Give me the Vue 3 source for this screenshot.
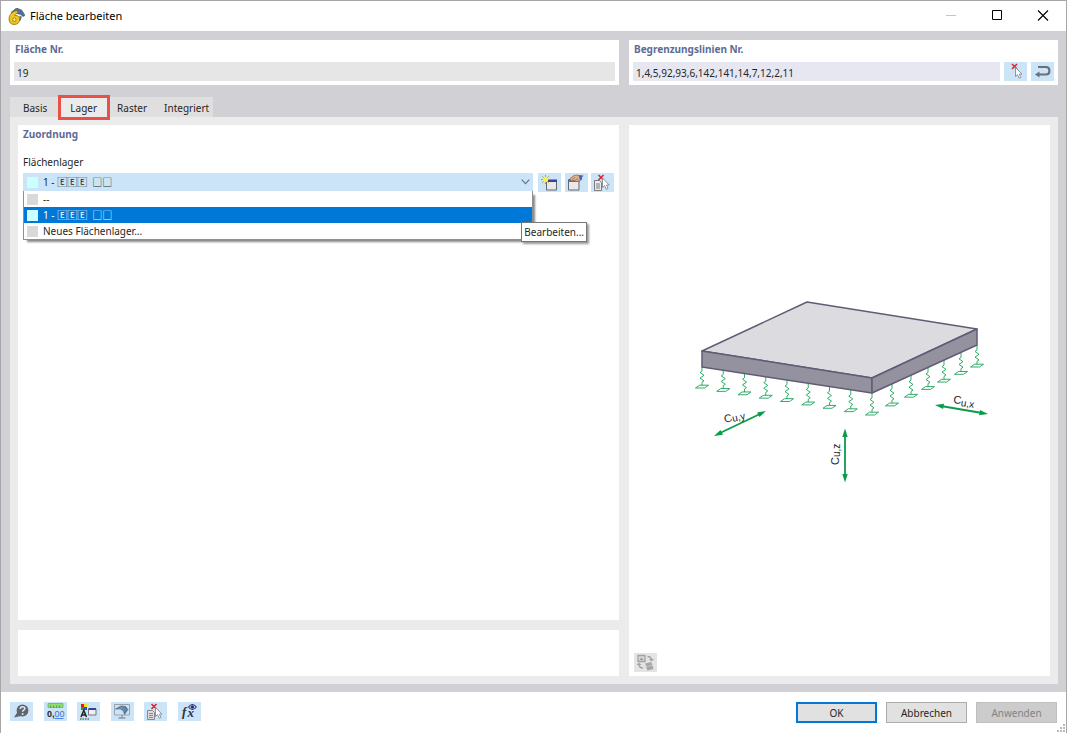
<script setup>
import { ref } from 'vue'

const surface = ref('19')
const lines = ref('1,4,5,92,93,6,142,141,14,7,12,2,11')
const tabs = ['Basis', 'Lager', 'Raster', 'Integriert']
const activeTab = ref('Lager')
const supportName = '1 - 🄴🄴🄴  □□'
const support = ref(supportName)
const options = [
  { label: '--', swatch: 'grey' },
  { label: supportName, swatch: 'cyan' },
  { label: 'Neues Flächenlager...', swatch: 'grey' },
]

const springs = []
for (let i = 0; i <= 8; i++) {
  springs.push({ x: 702 + (i * 170) / 8, y: 366 + (i * 27) / 8 })
}
for (const x of [892, 911, 928, 944, 961, 977]) {
  springs.push({ x, y: 393 - ((x - 872) * 48) / 105 })
}
</script>

<template>
  <div class="window">
    <header class="titlebar">
      <svg class="app-icon" viewBox="0 0 16 16" aria-hidden="true">
        <path d="M3 4 8 0l5 2 3 5-2 1-2-2-5-1-3 2z" fill="#4f6f9f" stroke="#3d5478" stroke-width=".6" />
        <path d="M11 7l2 1-1 4-2-1z" fill="#64758e" />
        <path d="M8.500 2.500C4 3 1 6 1 10.500 1 14 3 15.500 6 15.500s5-2 5-4.800C11 8.500 9.500 7 7.300 7l-1 .2C7 5.500 8 4.800 9.500 4.500z" fill="#f0c61a" stroke="#8e7518" stroke-width=".8" />
        <ellipse cx="6" cy="11" rx="1.500" ry="1.800" fill="#fff0a0" stroke="#8e7518" stroke-width=".8" />
      </svg>
      <h1>Fläche bearbeiten</h1>
      <div class="window-buttons">
        <button type="button" disabled aria-label="Minimieren"><svg viewBox="0 0 12 12"><path d="M1 5.500h10" stroke="#c4c4c4" /></svg></button>
        <button type="button" aria-label="Maximieren"><svg viewBox="0 0 12 12"><path d="M1.500 .5h9v9h-9z" fill="none" stroke="#000" /></svg></button>
        <button type="button" aria-label="Schließen"><svg viewBox="0 0 12 12"><path d="M1 .5l10 10M11 .5 1 10.500" stroke="#000" stroke-width="1.100" /></svg></button>
      </div>
    </header>

    <main class="content">
      <div class="top">
        <section class="box">
          <label for="surface">Fläche Nr.</label>
          <div class="field-row"><input id="surface" v-model="surface" class="readonly" readonly /></div>
        </section>
        <section class="box">
          <label for="lines">Begrenzungslinien Nr.</label>
          <div class="field-row">
            <input id="lines" v-model="lines" />
            <button class="tool" type="button" aria-label="Linien auswählen">
              <svg viewBox="0 0 23 19"><path d="M8 2l5 5M13 2 8 7" stroke="#e0252f" stroke-width="1.600" /><path d="M11.500 5.500v9l2-1.800 1.500 3.500 1.800-.8-1.500-3.300h2.700z" fill="#fff" stroke="#858b92" stroke-width=".9" /></svg>
            </button>
            <button class="tool" type="button" aria-label="Zurücksetzen">
              <svg viewBox="0 0 23 19"><path d="M7 5h8c4.500 0 4.500 7.500 0 7.500H7" fill="none" stroke="#6b6f75" stroke-width="2.200" /><path d="M8.500 9.500v6l-4.500-3z" fill="#6b6f75" /></svg>
            </button>
          </div>
        </section>
      </div>

      <nav class="tabs" role="tablist">
        <button
          v-for="tab in tabs"
          :key="tab"
          type="button"
          role="tab"
          :aria-selected="tab === activeTab"
          :class="{ active: tab === activeTab }"
          @click="activeTab = tab"
        >{{ tab }}</button>
      </nav>

      <div class="page">
        <div class="left">
          <section class="assign">
            <h2>Zuordnung</h2>
            <label for="support">Flächenlager</label>
            <div class="support-row">
              <div class="combo">
                <i class="swatch cyan"></i>
                <select id="support" v-model="support">
                  <option v-for="o in options" :key="o.label" :value="o.label">{{ o.label.replace('  ', '\u00a0\u00a0') }}</option>
                </select>
                <svg class="chevron" viewBox="0 0 9 6"><path d="M.7.700l3.800 4 3.800-4" fill="none" stroke="#6b747c" stroke-width="1.200" /></svg>
                <ul class="list" role="listbox" aria-label="Flächenlager">
                  <li
                    v-for="o in options"
                    :key="o.label"
                    role="option"
                    :aria-selected="o.label === support"
                    :class="{ selected: o.label === support }"
                    @click="support = o.label"
                  ><i class="swatch" :class="o.swatch"></i>{{ o.label }}</li>
                </ul>
                <div class="tooltip" role="tooltip">Bearbeiten...</div>
              </div>
              <div class="support-tools">
                <button class="tool" type="button" aria-label="Neu">
                  <svg viewBox="0 0 23 19">
                    <path d="M8.500 7.500h10v9.500h-10z" fill="#e9e9ec" stroke="#66666c" /><path d="M9 6.500h10v2.500H9z" fill="#3b4098" />
                    <path d="M7.500 2v9M3 6.500h9M4.300 3.300l6.400 6.400M10.700 3.300 4.300 9.700" stroke="#9b9d35" stroke-width=".9" /><circle cx="7.500" cy="6.500" r="2.700" fill="#fff23c" />
                  </svg>
                </button>
                <button class="tool" type="button" aria-label="Bearbeiten">
                  <svg viewBox="0 0 23 19">
                    <path d="M3.500 6.500h10.500v10.500h-10.500z" fill="#e9e9ec" stroke="#66666c" /><path d="M4 6h10v3H4z" fill="#6f6f78" />
                    <path d="M5 5.500 9 2.500l4-.500 3 2-1 4-4 .5-2-1-3 .5z" fill="#dcae8c" stroke="#87644e" stroke-width=".7" /><path d="M7 6.500l3-2M10 7.500l3-2" stroke="#87644e" stroke-width=".6" /><path d="M13.500 2l5 .5-1.500 2v2l-2 1z" fill="#4667af" />
                  </svg>
                </button>
                <button class="tool" type="button" aria-label="Auswählen">
                  <svg viewBox="0 0 23 19">
                    <path d="M3.500 7.500h5l2 2v8h-7z" fill="#ececec" stroke="#7b7b7b" /><path d="M5 11h4M5 13h4M5 15h4" stroke="#7b7b7b" />
                    <path d="M7.500 2l5 5M12.500 2l-5 5" stroke="#e0252f" stroke-width="1.600" /><path d="M11.500 5v9.500l2-2 1.800 3.800 1.700-.8-1.600-3.500h2.800z" fill="#fff" stroke="#858b92" stroke-width=".9" />
                  </svg>
                </button>
              </div>
            </div>
          </section>
          <section class="info"></section>
        </div>

        <section class="preview">
          <svg class="diagram" viewBox="690 292 300 216" role="img" aria-label="Flächenlager mit Federn">
            <g fill="none" stroke="#1aa35a" stroke-width=".9">
              <path
                v-for="(s, i) in springs"
                :key="i"
                :transform="`translate(${s.x} ${s.y})`"
                d="M0 0v5l-2 1.500 4 2.800-4 2.800 4 2.800-2 1.400v3M-6.500 22l4-2.800h9l-4 2.800z"
              />
            </g>
            <g stroke="#5f5d74" stroke-width="1.500" stroke-linejoin="round">
              <path d="M702 351 807 302 977 329 872 378z" fill="#dcdbe0" />
              <path d="M702 351 872 378V393L702 367z" fill="#94929f" />
              <path d="M872 378 977 329V345L872 393z" fill="#94929f" />
            </g>
            <g stroke="#0b9b4c" stroke-width="1.800">
              <path d="M719 433.500 761 413.500" /><path d="M845 435v41" /><path d="M941 406l41 7" />
            </g>
            <g fill="#0b9b4c">
              <path d="M714 436l6.500-6 2.500 4.800zM766 411l-8.900 1.400 2.400 4.700z" />
              <path d="M845 428.500l-2.700 8.500h5.400zM845 482.500l-2.700-8.500h5.400z" />
              <path d="M935 405l9-1.300-.9 5.300zM988 414l-8-4-.9 5.300z" />
            </g>
            <g class="axis">
              <text transform="translate(725 423) rotate(-14)">C<tspan class="sub" dy="1">u,y</tspan></text>
              <text transform="translate(839 465) rotate(-90)">C<tspan class="sub" dy="1">u,z</tspan></text>
              <text transform="translate(953 403) rotate(8)">C<tspan class="sub" dy="2">u,x</tspan></text>
            </g>
          </svg>
          <button class="tool muted" type="button" disabled aria-label="Ansicht wechseln">
            <svg viewBox="0 0 23 19">
              <path d="M4 2.500h7v6H4z" fill="#d8d8d8" stroke="#a2a2a2" stroke-width="1.300" /><path d="M5.500 7l2-2.500 2 2.500z" fill="#999" />
              <path d="M13.500 3.500c3 0 4 1.500 4 4M9 15c-3 0-4-1-4-4" fill="none" stroke="#a2a2a2" stroke-width="1.400" /><path d="M15 6h5L17.500 8.500zM2.500 12h5L5 9.500z" fill="#a2a2a2" />
              <path d="M11 10.500l6-1.500 1.500 3-6 1.500zM12 14l6.500-1.500 1 3.500-6 1.500z" fill="#a6a6a6" />
            </svg>
          </button>
        </section>
      </div>
    </main>

    <footer class="footer">
      <div class="footer-tools">
        <button class="tool" type="button" aria-label="Hilfe">
          <svg viewBox="0 0 23 19"><circle cx="12.500" cy="8.500" r="5.900" fill="#61656a" /><path d="M7.500 10 4 15.500l7-1.500z" fill="#61656a" /><path d="M10.300 7c0-3 4.500-3 4.500-.5 0 1.600-2.200 1.600-2.200 3.200" fill="none" stroke="#d6e8f7" stroke-width="1.500" /><circle cx="12.600" cy="12" r="1" fill="#d6e8f7" /></svg>
        </button>
        <button class="tool" type="button" aria-label="Einheiten">
          <svg viewBox="0 0 23 19"><path d="M4 1.500h15v4H4z" fill="#91dc75" stroke="#6bb657" stroke-width=".8" /><path d="M6.500 3.500v2M9.500 3.500v2M12.500 3.500v2M15.500 3.500v2" stroke="#5b9c49" /><text x="3" y="15" class="digits">0,<tspan fill="#3c71d5" font-weight="400">00</tspan></text><path d="M10.500 16.500h9" stroke="#4c83e6" /></svg>
        </button>
        <button class="tool" type="button" aria-label="Anzeige">
          <svg viewBox="0 0 23 19"><path d="M4 2h3v3H4z" fill="#e51a12" /><path d="M7 2h3v3H7z" fill="#efe31b" /><path d="M4 5h3v3H4z" fill="#15a426" /><path d="M7 5h3v3H7z" fill="#3347f0" /><path d="M4 15 6.800 8.500 9.500 15M5 13h3.500" fill="none" stroke="#222" stroke-width="1.500" /><path d="M3 17h9" stroke="#333" stroke-dasharray="1.500 1" /><path d="M11.500 7h7.500v6h-7.500z" fill="#f0f0f0" stroke="#77787f" /><path d="M11.500 6h7.500v2h-7.500z" fill="#3b4098" /></svg>
        </button>
        <button class="tool" type="button" aria-label="Ansicht">
          <svg viewBox="0 0 23 19"><path d="M3.500 2.500h15v10.500h-15z" fill="#cfe3f4" stroke="#98a2ab" /><path d="M11 13v3M7.500 16h7" stroke="#8b949c" stroke-width="1.300" /><path d="M4.500 7 10 4l4.500.5 2.500 3-3.500 5-1-3.500-3-2z" fill="#58799f" stroke="#425f80" stroke-width=".6" /><path d="M7 6.500l5 .5 2 3M9 5l5 1.500 2 2" fill="none" stroke="#8ba7c5" stroke-width=".6" /></svg>
        </button>
        <button class="tool" type="button" aria-label="Auswahl">
          <svg viewBox="0 0 23 19"><path d="M3.500 8.500h5l2 2v7h-7z" fill="#ddd" stroke="#888" /><path d="M5 11.500h4M5 13.500h4M5 15.500h4" stroke="#888" /><path d="M7.500 2l5 5M12.500 2l-5 5" stroke="#e0252f" stroke-width="1.600" /><path d="M11.500 5.500v9l2-2 1.800 3.800 1.700-.8-1.600-3.300h2.600z" fill="#fff" stroke="#858b92" stroke-width=".9" /></svg>
        </button>
        <button class="tool" type="button" aria-label="Formeln">
          <svg viewBox="0 0 23 19"><text x="4" y="14" class="formula">f</text><text x="9.500" y="15" class="formula">x</text><path d="M10.500 5c2.300-3.300 5.500-3.300 7.800 0-2.300 3.300-5.500 3.300-7.800 0z" fill="#c8cee9" stroke="#2f3880" stroke-width="1.100" /><circle cx="14.400" cy="5" r="1.700" fill="#27307c" /></svg>
        </button>
      </div>
      <div class="actions">
        <button class="primary" type="button">OK</button>
        <button type="button">Abbrechen</button>
        <button type="button" disabled>Anwenden</button>
      </div>
      <svg class="grip" viewBox="0 0 9 9" aria-hidden="true"><path d="M6 0h2v2H6zM3 3h2v2H3zM6 3h2v2H6zM0 6h2v2H0zM3 6h2v2H3zM6 6h2v2H6z" fill="#b9b9b9" /></svg>
    </footer>
  </div>
</template>

<style>
body { margin: 0; }
</style>

<style scoped>
* { box-sizing: border-box; }
.window {
  display: flex;
  flex-direction: column;
  min-height: 100vh;
  border: 1px solid #a6a6a8;
  border-bottom: 0;
  background: #fff;
  color: #262626;
  font: 10px/14px "Noto Sans", "Noto Sans CJK JP", "DejaVu Sans", sans-serif;
}
button, input, select { font: inherit; color: inherit; margin: 0; padding: 0; border: 0; border-radius: 0; outline: 0; }
h1, h2 { margin: 0; }
.titlebar { display: flex; align-items: center; height: 30px; padding-left: 7px; }
.app-icon { width: 17px; height: 17px; margin-right: 5px; }
h1 { font-size: 11px; font-weight: 400; color: #000; }
.window-buttons { display: flex; margin-left: auto; height: 100%; }
.window-buttons button { width: 46px; background: none; display: flex; align-items: center; justify-content: center; }
.window-buttons svg { width: 12px; height: 12px; }
.content { flex: 1; display: flex; flex-direction: column; background: #d1d0d5; padding: 9px 8px 8px 9px; }
.top { display: grid; grid-template-columns: 609fr 429fr; gap: 10px; }
.box { background: #fff; padding: 2px 4px 4px; height: 45px; display: flex; flex-direction: column; justify-content: space-between; }
.box label, h2 { font-size: 10px; line-height: 14px; font-weight: 700; color: #5d6b94; }
.box label { padding-left: 1px; }
.field-row { display: flex; gap: 4px; }
.field-row input { flex: 1; min-width: 0; height: 19px; padding: 2px 3px 0; background: #e7e7f1; }
.field-row input.readonly { background: #e6e6e6; }
.tool { flex: none; width: 23px; height: 19px; background: #cce4f7; display: flex; }
.tool svg { width: 23px; height: 19px; }
.tool.muted { background: #e4e4e4; }
.tabs { display: flex; align-self: flex-start; margin-top: 12px; height: 20px; background: #dfdfe0; padding-left: 4px; }
.tabs button { background: none; padding: 2px 8px 0 9px; white-space: nowrap; }
.tabs button:last-child { padding-right: 4px; }
.tabs button.active { align-self: center; height: 25px; margin: 0 -2px 0 3px; padding: 1px 10px 0 9px; background: #ebebeb; border: 3px solid #e8504a; z-index: 1; }
.page { flex: 1; display: grid; grid-template-columns: 601fr 421fr; gap: 10px; background: #ebebeb; padding: 8px; }
.left { display: flex; flex-direction: column; gap: 10px; }
.assign { flex: 1; background: #fff; padding: 2px 5px; }
.info { height: 46px; background: #fff; }
.assign > label { display: block; margin: 14px 0 4px; }
.support-row { display: flex; gap: 5px; }
.support-tools { display: flex; justify-content: space-between; width: 76px; }
.combo { flex: 1; position: relative; display: flex; align-items: center; height: 18px; background: #cce4f7; padding-left: 4px; }
.swatch { flex: none; width: 11px; height: 11px; margin-right: 5px; }
.cyan { background: #ccffff; }
.grey { background: #d9d9d9; }
select { flex: 1; height: 18px; appearance: none; background: transparent; }
.chevron { position: absolute; right: 3px; width: 9px; height: 6px; pointer-events: none; }
.list {
  position: absolute; top: 18px; left: 0; right: 0; z-index: 2;
  margin: 0; padding: 0; list-style: none; background: #fff;
  border: 1px solid #8f8f8f; border-top: 0; box-shadow: 3px 3px 2px -1px #888;
}
.list li { display: flex; align-items: center; height: 16px; padding-left: 3px; white-space: pre; }
.list li.selected { background: #0078d7; color: #fff; }
.tooltip {
  position: absolute; right: -54px; top: 49px; z-index: 3; white-space: nowrap;
  padding: 2px; border: 1px solid #777; background: #fff; box-shadow: 2px 2px 2px #999;
}
.preview { position: relative; background: #fff; display: flex; align-items: center; justify-content: center; padding-bottom: 2px; }
.diagram { width: 300px; height: 216px; }
.preview .tool { position: absolute; left: 5px; bottom: 4px; }
.axis { font: 11px "Liberation Sans", Arial, sans-serif; fill: #222; }
.sub { font-size: 10px; }
.digits { font: 700 9px "Liberation Sans", Arial, sans-serif; fill: #222; }
.formula { font: italic 700 13px "Liberation Serif", serif; fill: #333; }
.footer { position: relative; height: 41px; display: flex; align-items: center; justify-content: space-between; padding: 0 9px; }
.footer-tools { display: flex; justify-content: space-between; width: 191px; margin-bottom: 3px; }
.actions { display: flex; gap: 9px; }
.actions button { width: 81px; height: 21px; padding-top: 1px; background: #e1e1e1; border: 1px solid #adadad; }
.actions .primary { border: 2px solid #0078d7; }
.actions button:disabled { background: #ccc; border-color: #bfbfbf; color: #838383; }
.grip { position: absolute; right: 0; bottom: 0; width: 9px; height: 9px; }
</style>
